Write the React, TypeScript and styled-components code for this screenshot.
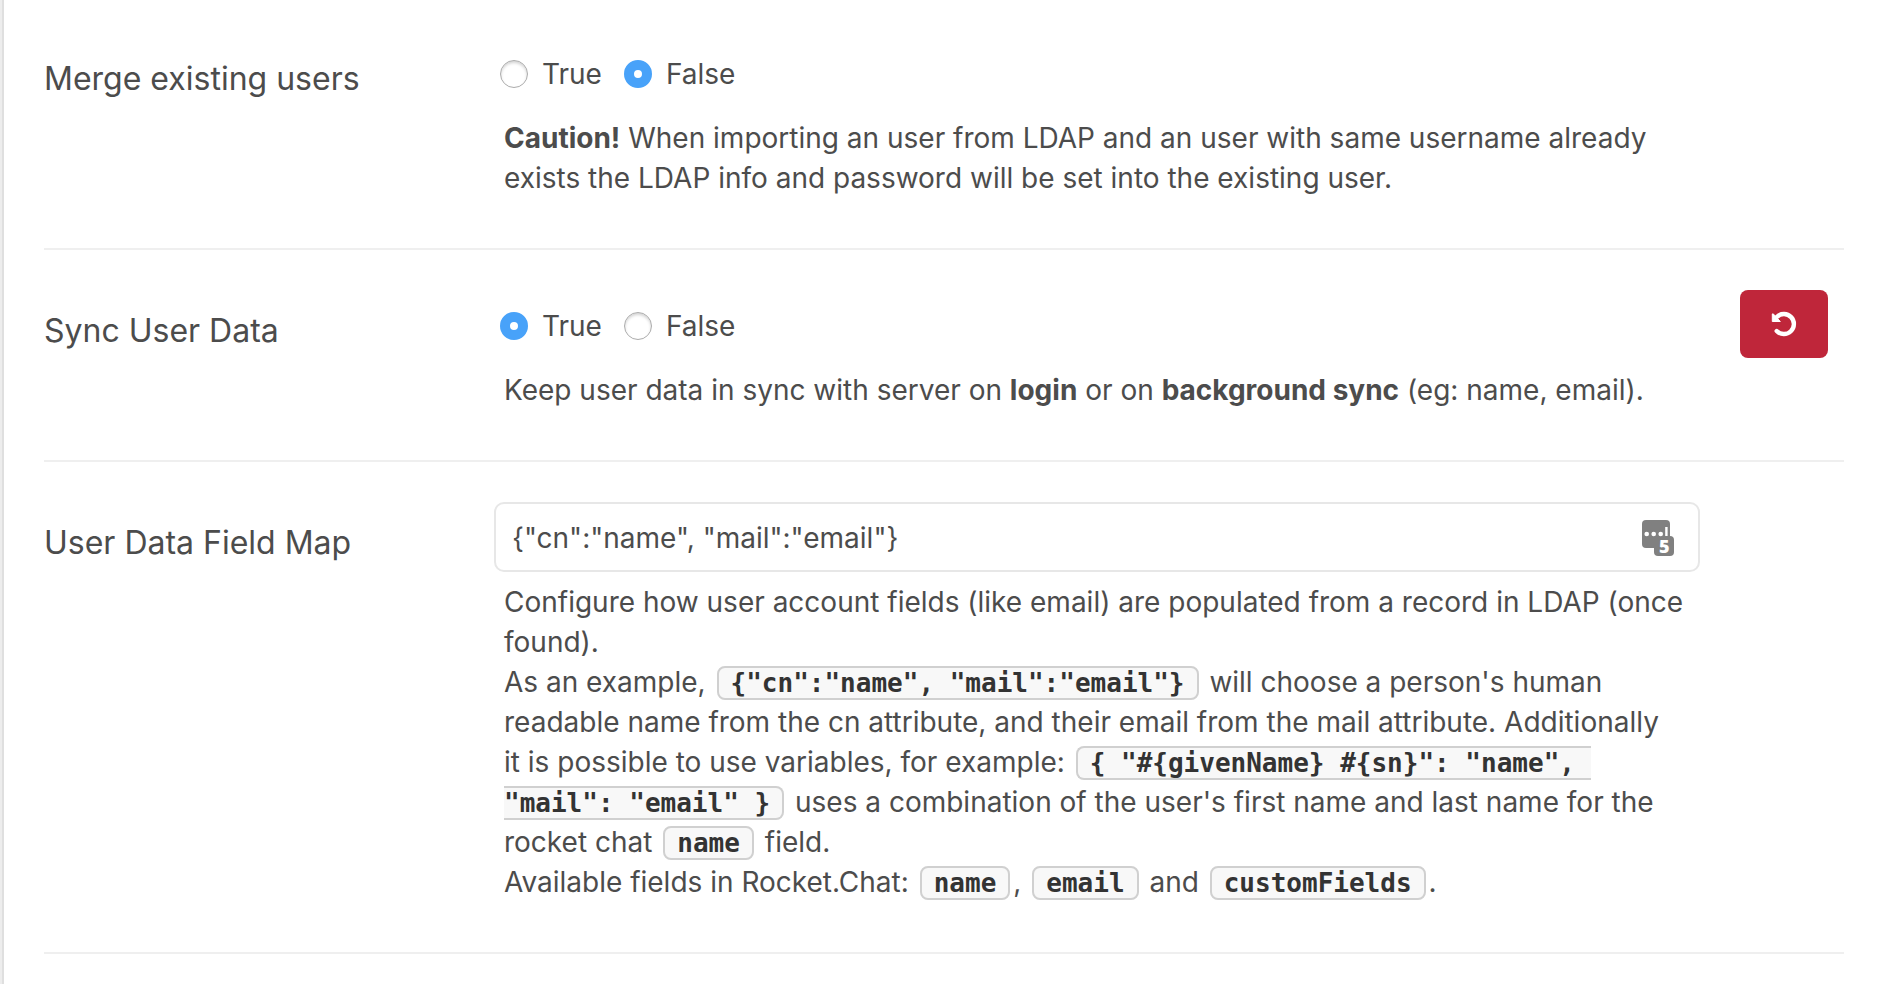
import React, { useState } from 'react';
import styled, { createGlobalStyle } from 'styled-components';

const sans = 'Inter, "Liberation Sans", sans-serif';

const GlobalStyle = createGlobalStyle`
  *, *::before, *::after { box-sizing: border-box; }
  body {
    margin: 0;
    background: #fff;
    color: #4c4c4c;
    font: 400 28px/40px ${sans};
  }
`;

const Page = styled.main`
  min-height: 100vh;
  border-left: 2px solid #ededed;
`;

const Panel = styled.form`
  min-height: 100vh;
  padding: 0 40px;
  border-left: 2px solid #dfdfdf;
`;

const Row = styled.div<{ $first?: boolean }>`
  display: grid;
  grid-template-columns: 450px minmax(0, 1fr) 144px;
  padding: ${(p) => (p.$first ? 38 : 40)}px 0 50px;
  border-bottom: 2px solid #efefef;
`;

const Title = styled.div`
  padding: 21px 0 0;
  font-size: 32px;
`;

const Field = styled.div`
  display: flex;
  flex-direction: column;
  gap: 10px;
`;

const RadioGroup = styled.div`
  display: flex;
  align-items: center;
  gap: 22px;
  height: 70px;
  padding: 2px 6px 0;
`;

const RadioLabel = styled.label`
  display: flex;
  align-items: center;
  gap: 14px;
`;

const Radio = styled.input`
  appearance: none;
  width: 28px;
  height: 28px;
  margin: 0;
  border: 1px solid #acacac;
  border-radius: 50%;
  background: #fff;
  box-shadow: inset 0 2px 3px #d4d4d4;
  &:checked {
    border: 10px solid #48a2f9;
    box-shadow: none;
  }
`;

const Description = styled.div`
  padding: 0 10px;
`;

const InputBox = styled.div`
  display: flex;
  align-items: center;
  height: 70px;
  padding: 2px 24px 0 16px;
  border: 2px solid #e7e7e7;
  border-radius: 10px;
`;

const TextInput = styled.input`
  flex: 1;
  min-width: 0;
  padding: 0;
  border: 0;
  outline: 0;
  background: none;
  color: inherit;
  font: inherit;
`;

const Code = styled.code`
  margin: 0 3px;
  padding: 0 12px;
  border: 2px solid #d0d0d0;
  border-radius: 8px;
  background: #f8f8f8;
  color: #333;
  font: 700 26px/32px "DejaVu Sans Mono", monospace;
  white-space: break-spaces;
`;

const Actions = styled.div`
  display: flex;
  justify-content: flex-end;
  align-items: flex-start;
  padding-right: 16px;
`;

const ResetButton = styled.button`
  display: grid;
  place-items: center;
  width: 88px;
  height: 68px;
  padding: 0;
  border: 0;
  border-radius: 8px;
  background: #bf263a;
  color: #fff;
`;

function BoolField({ name, initial }: { name: string; initial: boolean }) {
  const [value, setValue] = useState(initial);
  return (
    <RadioGroup role="radiogroup" aria-label={name}>
      {[true, false].map((v) => (
        <RadioLabel key={String(v)}>
          <Radio type="radio" name={name} checked={value === v} onChange={() => setValue(v)} />
          {v ? 'True' : 'False'}
        </RadioLabel>
      ))}
    </RadioGroup>
  );
}

function UndoIcon() {
  return (
    <svg width="26" height="26" viewBox="0 0 26 26" aria-hidden="true">
      <path
        d="M6 5.8A10 10 0 1 1 5.7 20"
        fill="none"
        stroke="#fff"
        strokeWidth="4.4"
        strokeLinecap="round"
      />
      <path d="M1.3 3v7.5h8L2.2 2.8z" fill="#fff" stroke="#fff" strokeLinejoin="round" />
    </svg>
  );
}

const BadgeIcon = styled.svg`
  flex: none;
  overflow: visible;
`;

const BadgeDigit = styled.text`
  font: 800 18px "Open Sans", sans-serif;
  text-anchor: middle;
  fill: #fff;
`;

function PasswordManagerIcon() {
  return (
    <BadgeIcon width="32" height="36" viewBox="0 0 32 36" aria-hidden="true">
      <rect width="28" height="28" rx="4" fill="#808080" />
      <rect x="12" y="16" width="20" height="20" rx="4" fill="#808080" />
      <g fill="#fff">
        <circle cx="4.7" cy="14" r="2.3" />
        <circle cx="11.7" cy="14" r="2.3" />
        <circle cx="18.7" cy="14" r="2.3" />
        <rect x="23.2" y="7" width="2.4" height="9" />
      </g>
      <BadgeDigit x="22.3" y="32.6">5</BadgeDigit>
    </BadgeIcon>
  );
}

export default function App() {
  const [map, setMap] = useState('{"cn":"name", "mail":"email"}');
  return (
    <>
      <GlobalStyle />
      <Page>
        <Panel>
          <Row $first>
            <Title>Merge existing users</Title>
            <Field>
              <BoolField name="Merge existing users" initial={false} />
              <Description>
                <b>Caution!</b> When importing an user from LDAP and an user with same username already exists the LDAP
                info and password will be set into the existing user.
              </Description>
            </Field>
          </Row>
          <Row>
            <Title>Sync User Data</Title>
            <Field>
              <BoolField name="Sync User Data" initial />
              <Description>
                Keep user data in sync with server on <b>login</b> or on <b>background sync</b> (eg: name, email).
              </Description>
            </Field>
            <Actions>
              <ResetButton type="button" aria-label="Reset">
                <UndoIcon />
              </ResetButton>
            </Actions>
          </Row>
          <Row>
            <Title as="label" htmlFor="field-map">User Data Field Map</Title>
            <Field>
              <InputBox>
                <TextInput id="field-map" value={map} onChange={(e) => setMap(e.target.value)} />
                <PasswordManagerIcon />
              </InputBox>
              <Description>
                Configure how user account fields (like email) are populated from a record in LDAP (once found).
                <br />
                As an example, <Code>{'{"cn":"name", "mail":"email"}'}</Code> will choose a person's human readable name
                from the cn attribute, and their email from the mail attribute. Additionally it&nbsp;is possible to use
                variables, for example: <Code>{'{ "#{givenName} #{sn}": "name", "mail": "email" }'}</Code> uses a
                combination of the user's first name and last name for the rocket chat <Code>name</Code> field.
                <br />
                Available fields in Rocket.Chat: <Code>name</Code>, <Code>email</Code> and <Code>customFields</Code>.
              </Description>
            </Field>
          </Row>
        </Panel>
      </Page>
    </>
  );
}
